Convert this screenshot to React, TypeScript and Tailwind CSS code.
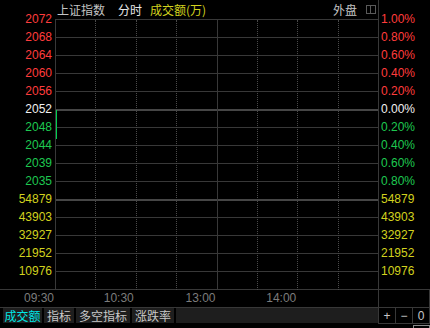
import React from "react";

const priceRows = [
  { left: "2072", right: "1.00%", tone: "text-[#ff3c3c]" },
  { left: "2068", right: "0.80%", tone: "text-[#ff3c3c]" },
  { left: "2064", right: "0.60%", tone: "text-[#ff3c3c]" },
  { left: "2060", right: "0.40%", tone: "text-[#ff3c3c]" },
  { left: "2056", right: "0.20%", tone: "text-[#ff3c3c]" },
  { left: "2052", right: "0.00%", tone: "text-[#f0f0f0]" },
  { left: "2048", right: "0.20%", tone: "text-[#1ec850]" },
  { left: "2044", right: "0.40%", tone: "text-[#1ec850]" },
  { left: "2039", right: "0.60%", tone: "text-[#1ec850]" },
  { left: "2035", right: "0.80%", tone: "text-[#1ec850]" },
  { left: "54879", right: "54879", tone: "text-[#d2d21e]" },
  { left: "43903", right: "43903", tone: "text-[#d2d21e]" },
  { left: "32927", right: "32927", tone: "text-[#d2d21e]" },
  { left: "21952", right: "21952", tone: "text-[#d2d21e]" },
  { left: "10976", right: "10976", tone: "text-[#d2d21e]" },
];

const tabs = ["成交额", "指标", "多空指标", "涨跌率"];

const num = "font-['Liberation_Sans',Arial,sans-serif] text-[12px]";
const cjk = "font-['Noto_Sans_CJK_SC','Noto_Sans',sans-serif] text-[12px]";

function GridRow({ index }: { index: number }) {
  // the 0.00% line and the volume split are drawn heavier
  if (index === 4 || index === 9) {
    return <div className="h-[19px] border-b-2 border-[#464646]" />;
  }
  if (index === 5 || index === 10) {
    return <div className="h-[17px] border-b border-[#383838]" />;
  }
  return <div className="h-[18px] border-b border-[#383838]" />;
}

export default function App() {
  return (
    <div className="w-[430px] h-[328px] bg-black overflow-hidden grid grid-cols-[55px_323px_52px] grid-rows-[19px_271px_18px_16px_4px] select-none">
      {/* left scale */}
      <div className="row-span-2 border-b border-[#383838] pt-[10px] pr-[3px] flex flex-col items-end">
        {priceRows.map((row) => (
          <div key={row.left} className={`h-[18px] leading-[18px] ${num} ${row.tone}`}>
            {row.left}
          </div>
        ))}
      </div>

      {/* title bar */}
      <div className={`flex items-center pl-[2px] pr-[2px] ${cjk}`}>
        <span className="text-[#c4c4c4]">上证指数</span>
        <span className="ml-[13px] text-[#e8e8e8]">分时</span>
        <span className="ml-[8px] text-[#d2d21e]">成交额(万)</span>
        <span className="ml-auto text-[#c4c4c4]">外盘</span>
        <span className="ml-[9px] flex w-[10px] h-[9px] border border-[#5a5a5a]">
          <span className="w-[4px] border-r border-[#5a5a5a]" />
        </span>
      </div>

      {/* right scale */}
      <div className="row-span-2 row-start-1 col-start-3 border-l border-b border-[#383838] pt-[10px] pl-[2px] flex flex-col">
        {priceRows.map((row, i) => (
          <div key={i} className={`h-[18px] leading-[18px] ${num} ${row.tone}`}>
            {row.right}
          </div>
        ))}
      </div>

      {/* chart */}
      <div className="relative col-start-2 row-start-2 border-l border-t border-[#383838] flex flex-col">
        {priceRows.map((_, i) => (
          <GridRow key={i} index={i} />
        ))}
        <div className="absolute inset-0 flex pointer-events-none">
          {Array.from({ length: 8 }).map((_, i) => (
            <div
              key={i}
              className={
                i === 7
                  ? "flex-1"
                  : i === 3
                    ? "flex-1 border-r border-[#383838]"
                    : "flex-1 border-r border-dotted border-[#4a4a4a]"
              }
            />
          ))}
        </div>
        <div className="absolute left-0 top-[90px] w-[1px] h-[29px] bg-[#00d050]" />
      </div>

      {/* time axis */}
      <div className={`col-span-2 row-start-3 border-b border-[#383838] flex text-[#7c7c7c] ${num}`}>
        <div className="w-[55px] pr-[1px] text-right leading-[17px]">09:30</div>
        <div className="w-[80.75px] pr-[2px] text-right leading-[17px]">10:30</div>
        <div className="w-[80.75px] pr-[1px] text-right leading-[17px]">13:00</div>
        <div className="w-[80.75px] pr-[1px] text-right leading-[17px]">14:00</div>
      </div>
      <div className="col-start-3 row-start-3 border-l border-r border-b border-[#383838]" />

      {/* tab strip */}
      <div className={`col-span-2 row-start-4 flex gap-[2px] pl-[3px] ${cjk}`}>
        {tabs.map((tab, i) => (
          <div
            key={tab}
            className={`h-[15px] leading-[15px] bg-[#1e1e1e] ${
              i === 0 ? "w-[39px] text-center text-[#00e6e6]" : "px-[3px] text-[#c8c8c8]"
            }`}
          >
            {tab}
          </div>
        ))}
        <div className="flex-1 h-[15px] bg-[#1e1e1e]" />
      </div>
      <div className={`col-start-3 row-start-4 border-l border-r border-b border-[#383838] flex text-[#c8c8c8] ${num}`}>
        <div className="flex-1 flex items-center justify-center leading-none">+</div>
        <div className="flex-1 flex items-center justify-center leading-none border-l border-[#383838]">−</div>
        <div className="flex-1 flex items-center justify-center leading-none border-l border-[#383838]">0</div>
      </div>

      {/* bottom edge */}
      <div className="col-span-2 row-start-5" />
      <div className="col-start-3 row-start-5 flex justify-end">
        <div className="mt-[1px] w-[17px] border-t border-l border-r border-[#8a8a8a]" />
      </div>
    </div>
  );
}
